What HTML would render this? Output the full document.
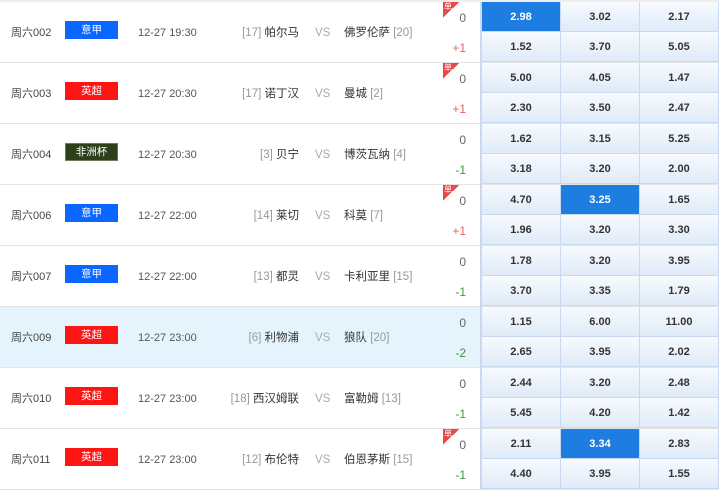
<!DOCTYPE html>
<html><head><meta charset="utf-8"><style>
*{margin:0;padding:0;box-sizing:border-box}
body{width:719px;height:489px;overflow:hidden;background:#fff;font-family:"Liberation Sans","Noto Sans CJK SC",sans-serif;font-size:11px;color:#333;position:relative}
.top{position:absolute;left:0;top:0;width:719px;height:2px;background:#eee}
.row{position:absolute;left:0;width:719px;height:61px;border-bottom:1px solid #e4e4e4}
.row.hl{background:#e5f4fc}
.row div{position:absolute;line-height:14px}
.no{left:11px;top:24px;color:#444}
.row .bd{left:65px;top:19px;width:53px;height:18px;color:#fff;text-align:center;line-height:18px;font-size:10.5px}
.b1{background:#0a66ff}.b2{background:#ff1414}.row .b3{background:#2c4019;border:1px solid #6a7a5a;line-height:16px}
.tm{left:138px;top:24px;color:#555}
.home{right:420px;top:24px;color:#333;font-size:11.5px;text-align:right;white-space:nowrap}
.vs{left:315px;top:24px;color:#aaa;font-size:11.5px}
.away{left:344px;top:24px;color:#333;font-size:11.5px;white-space:nowrap}
.g{color:#999}
.h0{right:253px;top:9px;color:#666;font-size:12px}
.h1{right:253px;top:39px;font-size:12px}
.red{color:#f06060}.grn{color:#3a9a3a}
.row .tri{left:443px;top:0;width:16px;height:16px;background:linear-gradient(135deg,#e84a4a 50%,transparent 50%)}
.row .tri span{position:absolute;left:1px;top:0;color:#fff;font-size:8px;line-height:9px}
.row .odds{left:480px;top:0;width:239px;height:61px;border-left:2px solid #c9daf0}
.row .c{position:absolute;height:30px;width:79px;border-right:1px solid #c9daf0;border-bottom:1px solid #c9daf0;background:linear-gradient(#f7fafe,#dfebf8);text-align:center;line-height:30px;font-weight:bold;font-size:11px;color:#333}
.row .c.s{background:#1e7de0;color:#fff}
</style></head><body>
<div class="top"></div>

<div class="row" style="top:2px"><div class="no">周六002</div><div class="bd b1">意甲</div><div class="tm">12-27 19:30</div><div class="home"><span class="g">[17]</span> 帕尔马</div><div class="vs">VS</div><div class="away">佛罗伦萨 <span class="g">[20]</span></div><div class="tri"><span>单</span></div><div class="h0">0</div><div class="h1 red">+1</div>
<div class="odds"><div class="c s" style="left:0;top:0">2.98</div><div class="c" style="left:79px;top:0">3.02</div><div class="c" style="left:158px;top:0">2.17</div><div class="c" style="left:0;top:30px">1.52</div><div class="c" style="left:79px;top:30px">3.70</div><div class="c" style="left:158px;top:30px">5.05</div></div></div>

<div class="row" style="top:63px"><div class="no">周六003</div><div class="bd b2">英超</div><div class="tm">12-27 20:30</div><div class="home"><span class="g">[17]</span> 诺丁汉</div><div class="vs">VS</div><div class="away">曼城 <span class="g">[2]</span></div><div class="tri"><span>单</span></div><div class="h0">0</div><div class="h1 red">+1</div>
<div class="odds"><div class="c" style="left:0;top:0">5.00</div><div class="c" style="left:79px;top:0">4.05</div><div class="c" style="left:158px;top:0">1.47</div><div class="c" style="left:0;top:30px">2.30</div><div class="c" style="left:79px;top:30px">3.50</div><div class="c" style="left:158px;top:30px">2.47</div></div></div>

<div class="row" style="top:124px"><div class="no">周六004</div><div class="bd b3">非洲杯</div><div class="tm">12-27 20:30</div><div class="home"><span class="g">[3]</span> 贝宁</div><div class="vs">VS</div><div class="away">博茨瓦纳 <span class="g">[4]</span></div><div class="h0">0</div><div class="h1 grn">-1</div>
<div class="odds"><div class="c" style="left:0;top:0">1.62</div><div class="c" style="left:79px;top:0">3.15</div><div class="c" style="left:158px;top:0">5.25</div><div class="c" style="left:0;top:30px">3.18</div><div class="c" style="left:79px;top:30px">3.20</div><div class="c" style="left:158px;top:30px">2.00</div></div></div>

<div class="row" style="top:185px"><div class="no">周六006</div><div class="bd b1">意甲</div><div class="tm">12-27 22:00</div><div class="home"><span class="g">[14]</span> 莱切</div><div class="vs">VS</div><div class="away">科莫 <span class="g">[7]</span></div><div class="tri"><span>单</span></div><div class="h0">0</div><div class="h1 red">+1</div>
<div class="odds"><div class="c" style="left:0;top:0">4.70</div><div class="c s" style="left:79px;top:0">3.25</div><div class="c" style="left:158px;top:0">1.65</div><div class="c" style="left:0;top:30px">1.96</div><div class="c" style="left:79px;top:30px">3.20</div><div class="c" style="left:158px;top:30px">3.30</div></div></div>

<div class="row" style="top:246px"><div class="no">周六007</div><div class="bd b1">意甲</div><div class="tm">12-27 22:00</div><div class="home"><span class="g">[13]</span> 都灵</div><div class="vs">VS</div><div class="away">卡利亚里 <span class="g">[15]</span></div><div class="h0">0</div><div class="h1 grn">-1</div>
<div class="odds"><div class="c" style="left:0;top:0">1.78</div><div class="c" style="left:79px;top:0">3.20</div><div class="c" style="left:158px;top:0">3.95</div><div class="c" style="left:0;top:30px">3.70</div><div class="c" style="left:79px;top:30px">3.35</div><div class="c" style="left:158px;top:30px">1.79</div></div></div>

<div class="row hl" style="top:307px"><div class="no">周六009</div><div class="bd b2">英超</div><div class="tm">12-27 23:00</div><div class="home"><span class="g">[6]</span> 利物浦</div><div class="vs">VS</div><div class="away">狼队 <span class="g">[20]</span></div><div class="h0">0</div><div class="h1 grn">-2</div>
<div class="odds"><div class="c" style="left:0;top:0">1.15</div><div class="c" style="left:79px;top:0">6.00</div><div class="c" style="left:158px;top:0">11.00</div><div class="c" style="left:0;top:30px">2.65</div><div class="c" style="left:79px;top:30px">3.95</div><div class="c" style="left:158px;top:30px">2.02</div></div></div>

<div class="row" style="top:368px"><div class="no">周六010</div><div class="bd b2">英超</div><div class="tm">12-27 23:00</div><div class="home"><span class="g">[18]</span> 西汉姆联</div><div class="vs">VS</div><div class="away">富勒姆 <span class="g">[13]</span></div><div class="h0">0</div><div class="h1 grn">-1</div>
<div class="odds"><div class="c" style="left:0;top:0">2.44</div><div class="c" style="left:79px;top:0">3.20</div><div class="c" style="left:158px;top:0">2.48</div><div class="c" style="left:0;top:30px">5.45</div><div class="c" style="left:79px;top:30px">4.20</div><div class="c" style="left:158px;top:30px">1.42</div></div></div>

<div class="row" style="top:429px"><div class="no">周六011</div><div class="bd b2">英超</div><div class="tm">12-27 23:00</div><div class="home"><span class="g">[12]</span> 布伦特</div><div class="vs">VS</div><div class="away">伯恩茅斯 <span class="g">[15]</span></div><div class="tri"><span>单</span></div><div class="h0">0</div><div class="h1 grn">-1</div>
<div class="odds"><div class="c" style="left:0;top:0">2.11</div><div class="c s" style="left:79px;top:0">3.34</div><div class="c" style="left:158px;top:0">2.83</div><div class="c" style="left:0;top:30px">4.40</div><div class="c" style="left:79px;top:30px">3.95</div><div class="c" style="left:158px;top:30px">1.55</div></div></div>
</body></html>
